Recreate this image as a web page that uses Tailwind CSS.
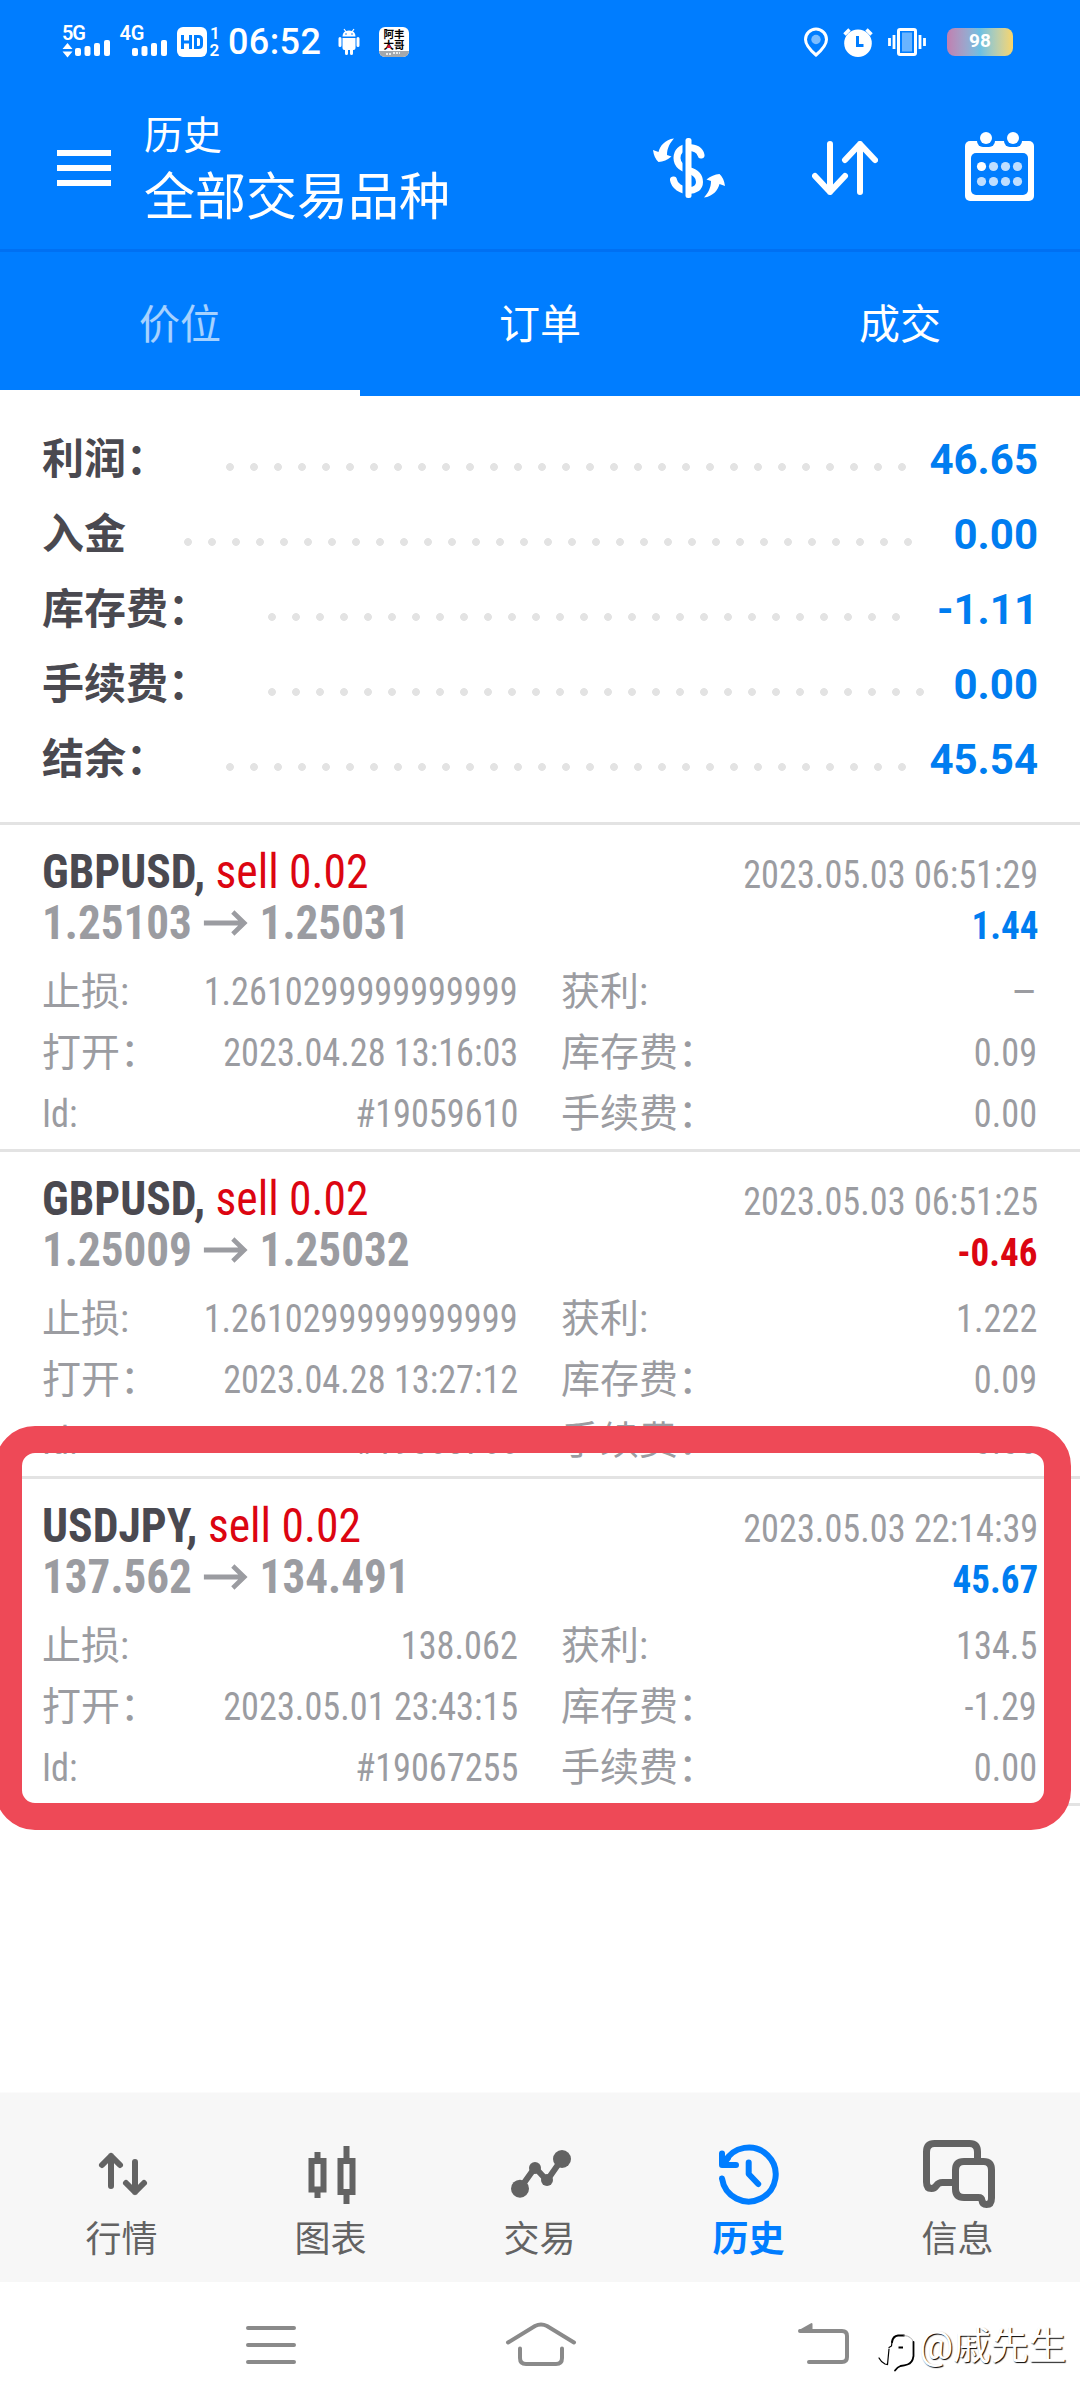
<!DOCTYPE html>
<html lang="zh-CN">
<head>
<meta charset="utf-8">
<title>历史</title>
<script src="https://cdn.jsdelivr.net/npm/@tailwindcss/browser@4"></script>
</head>
<body class="bg-white font-['Roboto','Noto_Sans_CJK_SC',sans-serif]">
<div class="relative flex h-[2408px] w-[1080px] flex-col overflow-hidden bg-white">

  <!-- Status bar and app header -->
  <header class="flex h-[252px] shrink-0 flex-col border-b-3 border-[#0070f2] bg-[#007dff] text-white">
    <div class="flex h-[84px] shrink-0 items-center pl-[62px]">
      <svg class="h-8 w-[158px]" viewBox="62 26 158 32" fill="#fff" overflow="visible">
        <g font-family="Roboto" font-weight="600" font-size="20"><text x="62" y="39.500" textLength="24">5G</text><text x="119.500" y="39.500" textLength="25">4G</text></g>
        <path d="M67.500 43l5 6h-10zM67.500 57.500l5-6h-10z"/>
        <rect x="75" y="48" width="6" height="8" rx="2"/><rect x="84.500" y="46" width="6" height="10" rx="2"/><rect x="94" y="43" width="6" height="13" rx="2"/><rect x="104" y="40" width="6" height="16" rx="2"/>
        <rect x="132" y="48" width="6" height="8" rx="2"/><rect x="141.500" y="46" width="6" height="10" rx="2"/><rect x="151" y="43" width="6" height="13" rx="2"/><rect x="161" y="40" width="6" height="16" rx="2"/>
        <rect x="177" y="27" width="30" height="30" rx="6"/>
        <g fill="none" stroke="#007dff" stroke-width="3"><path d="M182.500 35v14M190.500 35v14M182.500 42h8M195.500 36.500h3q3 0 3 3v5q0 3-3 3h-3z"/></g>
        <g font-family="Roboto" font-weight="600" font-size="17"><text x="210" y="39">1</text><text x="209.500" y="56">2</text></g>
      </svg>
      <span class="ml-2 w-[110px] text-[36px] leading-8 font-medium tracking-[0.4px]">06:52</span>
      <svg class="h-8 w-[22px]" viewBox="338 26 22 32" fill="#fff">
        <path d="M342.500 36.500q0-6 6.500-6t6.500 6zM342.500 38h13v10q0 2-2 2h-9q-2 0-2-2z"/>
        <path d="M344 29l2.500 3.500M354 29l-2.500 3.500" stroke="#fff" stroke-width="1.200"/>
        <path d="M340 38.500v7M358 38.500v7M346.500 49v4.500M351.500 49v4.500" stroke="#fff" stroke-width="3" stroke-linecap="round"/>
        <circle cx="346" cy="34" r=".8" fill="#007dff"/><circle cx="352" cy="34" r=".8" fill="#007dff"/>
      </svg>
      <svg class="ml-[19px] h-8 w-[30px]" viewBox="379 26 30 32">
        <defs><clipPath id="app"><rect x="379" y="27" width="30" height="30" rx="6"/></clipPath></defs>
        <g clip-path="url(#app)"><path d="M379 27h30v30h-30z" fill="#fff"/><path d="M379 51h30v6h-30z" fill="#a3a8ad"/></g>
        <g font-family="Noto Sans CJK SC" font-weight="700" font-size="10.500" fill="#000"><text x="383.500" y="38">阿丰</text><text x="383.500" y="48.500">大哥</text></g>
        <path d="M389 44l2.500 4h-5z" fill="#d8143c"/><path d="M386 54h5M393 53h7" stroke="#fff" stroke-width="1.500" stroke-dasharray="2 1"/>
      </svg>
      <svg class="ml-[394px] h-8 w-[125px]" viewBox="803 26 125 32">
        <path d="M816 55q-10.500-9-10.500-15.500a10.500 10.500 0 0 1 21 0q0 6.500-10.500 15.500z" fill="none" stroke="#fff" stroke-width="3"/>
        <circle cx="816" cy="39.500" r="4.700" fill="#7cbdff"/>
        <circle cx="858" cy="43.300" r="13.800" fill="#fff"/>
        <path d="M844.500 34.500l5-5M871.500 34.500l-5-5" stroke="#fff" stroke-width="3.500"/>
        <path d="M857.500 36v9.500h6" fill="none" stroke="#007dff" stroke-width="3"/>
        <rect x="898.500" y="29.500" width="17" height="25" rx="1.500" fill="none" stroke="#fff" stroke-width="3"/>
        <path d="M902 32.500h10v19h-10z" fill="#69b4ff"/>
        <path d="M889.500 38v8M894 35v14M920 35v14M924.500 38v8" stroke="#fff" stroke-width="2.800"/>
      </svg>
      <span class="ml-[19px] h-7 w-[66px] rounded-lg bg-linear-to-r from-[#c07fb0] via-[#6cc0e2] to-[#f8d568] text-center text-[19px] leading-[26px] font-bold">98</span>
    </div>
    <div class="flex h-[165px] items-start pl-[57px]">
      <svg class="mt-[66px] h-9 w-[54px]" viewBox="0 0 54 36" fill="#fff"><path d="M0 0h54v6H0zM0 15h54v6H0zM0 30h54v6H0z"/></svg>
      <div class="ml-[33px] mt-[26px] w-[508px]">
        <div class="text-[39px] leading-[52px]">历史</div>
        <div class="mt-[7px] text-[51px] leading-[58px]">全部交易品种</div>
      </div>
      <svg class="mt-[54px] h-[60px] w-[74px]" viewBox="0 0 74 60" fill="#fff">
        <path d="M49 17C47.500 11 41 9.500 36 9.500 29 9.500 25 14 25 20c0 8 7 10.500 12 12.500 7 2 10.500 6 10.500 11.500 0 6-5 8.500-10.500 8.500-8 0-14.500-4.500-15.500-10.500" fill="none" stroke="#fff" stroke-width="7" stroke-linecap="round"/>
        <path d="M30.500 4h5v52h-5z" fill="#007dff"/>
        <rect x="33.500" width="6" height="60" rx="2.500"/>
        <path id="swap" d="M22 .5C13 1.500 8 8 6.500 14L1 12q1 8 5.500 12 7-.5 13-5.500L15 17c0-7 3-12 7-16.500z"/>
        <use href="#swap" transform="rotate(180 37 30)"/>
      </svg>
      <svg class="ml-[86px] mt-[57px] h-[54px] w-[66px]" viewBox="0 0 66 54" fill="none" stroke="#fff" stroke-width="6" stroke-linecap="round" stroke-linejoin="round"><path d="M18 3v48M3 35l15 16 15-16M48 51V3M33 19L48 3l15 16"/></svg>
      <svg class="ml-[87px] mt-[48px] h-[69px] w-[70px]" viewBox="0 0 70 69" fill="#fff">
        <rect y="9" width="69" height="60" rx="5"/>
        <rect x="6" y="21" width="57" height="42" rx="5" fill="#007dff"/>
        <g fill="#007dff"><rect x="12" y="0" width="18" height="15" rx="6"/><rect x="39" y="0" width="18" height="15" rx="6"/></g>
        <circle cx="21" cy="6" r="6"/><circle cx="48" cy="6" r="6"/>
        <circle cx="16.500" cy="34.500" r="4.600"/>
        <g opacity=".75"><circle cx="28.500" cy="34.500" r="4.600"/><circle cx="40.500" cy="34.500" r="4.600"/><circle cx="52.500" cy="34.500" r="4.600"/><circle cx="16.500" cy="49.500" r="4.600"/><circle cx="28.500" cy="49.500" r="4.600"/><circle cx="40.500" cy="49.500" r="4.600"/><circle cx="52.500" cy="49.500" r="4.600"/></g>
      </svg>
    </div>
  </header>

  <!-- Tabs -->
  <nav class="grid h-36 shrink-0 grid-cols-3 bg-[#007dff] text-center text-[41px] leading-[146px] text-white">
    <div class="h-36 border-b-6 border-white text-white/65">价位</div>
    <div>订单</div>
    <div>成交</div>
  </nav>

  <!-- Totals -->
  <section id="totals" class="flex h-[426px] shrink-0 flex-col pt-[26px] text-[42px] font-semibold text-[#4a4950]"></section>

  <!-- Closed positions -->
  <section id="deals" class="shrink-0 border-b-3 border-[#e3e3e3] text-[39px] text-[#9b9ca1]"></section>

  <div class="grow"></div>

  <!-- Bottom navigation -->
  <nav class="flex h-[190px] shrink-0 border-t border-[#fbfbfb] bg-[#f7f7f7] px-[17px] text-center text-[36px] leading-[60px] text-[#636363]">
    <div class="flex w-[209px] flex-col items-center pt-[47px]">
      <svg class="h-[70px] w-20 shrink-0" viewBox="0 0 80 70" fill="none" stroke="#636363" stroke-width="6" stroke-linecap="round" stroke-linejoin="round"><path d="M29 46V16M20 25l9-9 9 9M53 22v30M44 43l9 9 9-9"/></svg>
      <span>行情</span>
    </div>
    <div class="flex w-[209px] flex-col items-center pt-[47px]">
      <svg class="h-[70px] w-20 shrink-0" viewBox="0 0 80 70" fill="none" stroke="#636363" stroke-width="6"><path d="M20.500 21h12v28.500h-12zM49.500 21h12v31h-12zM26.500 12v8M26.500 51v7M55.500 6v14M55.500 53v11"/></svg>
      <span>图表</span>
    </div>
    <div class="flex w-[209px] flex-col items-center pt-[47px]">
      <svg class="h-[70px] w-20 shrink-0" viewBox="0 0 80 70" fill="#636363"><path d="M20 48.500L35 27.500l12 13L62 19" fill="none" stroke="#636363" stroke-width="6"/><circle cx="20" cy="48.700" r="9"/><circle cx="35" cy="28" r="6"/><circle cx="47" cy="40" r="6"/><circle cx="62" cy="19" r="9"/></svg>
      <span>交易</span>
    </div>
    <div class="flex w-[209px] flex-col items-center pt-[47px] text-[#007dff]">
      <svg class="h-[70px] w-20 shrink-0" viewBox="0 0 80 70" fill="none" stroke="#007dff" stroke-width="6" stroke-linecap="round" stroke-linejoin="round"><path d="M13 38.500a27 27 0 1 0 2.500-16M13 13.500v11.500h14M39.700 22.500V34l9.500 10M14 24l5-6"/></svg>
      <span class="font-semibold">历史</span>
    </div>
    <div class="flex w-[209px] flex-col items-center pt-[47px]">
      <svg class="h-[70px] w-20 shrink-0" viewBox="0 0 80 70" fill="none" stroke="#636363" stroke-width="7"><path d="M59.500 20v-8q0-8.500-8-8.500H16.500Q8.500 3.500 8.500 12v30q0 6.500 5 6.500 3 0 5-3t6-3H36"/><path d="M46 21.500h19.500q8 0 8 8.500v28q0 6.500-5 6.500-4 0-4.500-4-.5-3-3.500-3H46q-8.500 0-8.500-8.500V30q0-8.500 8.500-8.500z"/></svg>
      <span>信息</span>
    </div>
  </nav>

  <!-- System navigation -->
  <div class="flex h-[126px] shrink-0 items-start pl-[246px] pt-[38px]">
    <svg class="h-[50px] w-[50px]" viewBox="0 0 50 50" stroke="#8a8a8a" stroke-width="4" stroke-linecap="round"><path d="M2 8h46M2 25h46M2 42h46"/></svg>
    <svg class="ml-[208px] h-[50px] w-[74px]" viewBox="0 0 74 50" fill="none" stroke="#8a8a8a" stroke-width="4" stroke-linecap="round"><path d="M4 22.500L31 6q6-3 12 0l27 16.500M16 28.500V38q0 6 6 6h30q6 0 6-6v-9.500"/></svg>
    <svg class="ml-[218px] h-12 w-14" viewBox="0 0 56 48" fill="none" stroke="#8a8a8a" stroke-width="4" stroke-linecap="round"><path d="M4 11h42q5 0 5 5v21q0 5-5 5H13"/><path d="M4 10.500L15.500 4v6.500z" fill="#8a8a8a" stroke-width="2" stroke-linejoin="round"/></svg>
    <div class="ml-[26px] flex items-start">
      <svg class="mt-2 h-[46px] w-10 shrink-0" viewBox="0 0 40 46" fill="none" stroke="#000" stroke-linecap="round"><path d="M14 14q1-6 6-6.500h6" stroke-width="2"/><path d="M26 7.500q8 .5 9.500 7" stroke="#999" stroke-width=".8"/><path d="M35.500 14v14q-1 7-6 8.500-3 1-7 1.500-3 1-5.500 4.500" stroke-width="1.800"/><path d="M14 14l-.5 4-2.500 1.500M11 21L9.500 36.500 7 36q-4-2-6-6" stroke-width="1.200"/><path d="M20.500 19.500H25" stroke-width="2" stroke-linecap="butt"/></svg>
      <span class="ml-px mt-1 text-[38px] leading-[44px] tracking-[-0.2px] text-white [text-shadow:1px_1px_1px_#000]">@戚先生</span>
    </div>
  </div>

  <!-- Highlight frame over the third position -->
  <div class="absolute top-[1426px] -left-[5px] h-[404px] w-[1076px] rounded-[40px] border-27 border-[#ee4957]"></div>
</div>

<script>
// label, value, and the right-hand inset of the dot leader
const totals = [
  ['利润：', '46.65', 132],
  ['入金', '0.00', 126],
  ['库存费：', '-1.11', 138],
  ['手续费：', '0.00', 114],
  ['结余：', '45.54', 132]
];
document.getElementById('totals').innerHTML = totals.map(([label, value, inset]) => `
  <div class="relative flex h-[75px] items-center px-[42px] leading-[75px]">
    <span>${label}</span>
    <span class="ml-[58px] mt-[14px] h-2 grow bg-[radial-gradient(circle_at_4px_4px,#e3e3e3_3.5px,transparent_4.3px)] bg-[size:24px_8px]" style="margin-right:${inset}px"></span>
    <span class="absolute right-[42px] font-bold text-[#007df0]">${value}</span>
  </div>`).join('');

const deals = [
  ['GBPUSD', '1.25103', '1.25031', '2023.05.03 06:51:29', '1.44', '1.2610299999999999', '–', '2023.04.28 13:16:03', '0.09', '#19059610', '0.00'],
  ['GBPUSD', '1.25009', '1.25032', '2023.05.03 06:51:25', '-0.46', '1.2610299999999999', '1.222', '2023.04.28 13:27:12', '0.09', '#19063766', '0.00'],
  ['USDJPY', '137.562', '134.491', '2023.05.03 22:14:39', '45.67', '138.062', '134.5', '2023.05.01 23:43:15', '-1.29', '#19067255', '0.00']
];
const num = 'origin-right scale-x-93 font-stretch-75%';
document.getElementById('deals').innerHTML = deals.map(d => `
  <article class="h-[327px] border-t-3 border-[#e3e3e3] px-[42px] pt-[21px]">
    <div class="flex h-[51px] items-baseline justify-between leading-[51px]">
      <span class="origin-left scale-x-95 font-stretch-75% text-[48px]"><b class="font-bold text-[#4a4950]">${d[0]},</b> <span class="text-[#dc0511]">sell 0.02</span></span>
      <span class="origin-right scale-x-93 font-stretch-75%">${d[3]}</span>
    </div>
    <div class="flex h-[51px] items-baseline justify-between leading-[51px] font-bold">
      <span class="flex origin-left scale-x-94 items-baseline font-stretch-75% text-[48px]">${d[1]}<svg class="mx-3 h-[26px] w-12 self-center" viewBox="0 0 48 26" fill="none" stroke="#9b9ca1" stroke-width="5"><path d="M0 13h44M31 2l12 11-12 11"/></svg>${d[2]}</span>
      <span class="origin-right scale-x-95 font-stretch-75% ${d[4][0] === '-' ? 'text-[#dc0511]' : 'text-[#007df0]'}">${d[4]}</span>
    </div>
    <div class="mt-[14px] grid grid-cols-[476px_476px] gap-x-[43px] leading-[61px]">
      <div class="flex justify-between"><span>止损:</span><span class="${num}">${d[5]}</span></div>
      <div class="flex justify-between"><span>获利:</span><span class="${d[6] === '–' ? '' : num}">${d[6]}</span></div>
      <div class="flex justify-between"><span>打开：</span><span class="${num}">${d[7]}</span></div>
      <div class="flex justify-between"><span>库存费：</span><span class="${num}">${d[8]}</span></div>
      <div class="flex justify-between"><span class="origin-left scale-x-93 font-stretch-75%">Id:</span><span class="${num}">${d[9]}</span></div>
      <div class="flex justify-between"><span>手续费：</span><span class="${num}">${d[10]}</span></div>
    </div>
  </article>`).join('');
</script>
</body>
</html>
